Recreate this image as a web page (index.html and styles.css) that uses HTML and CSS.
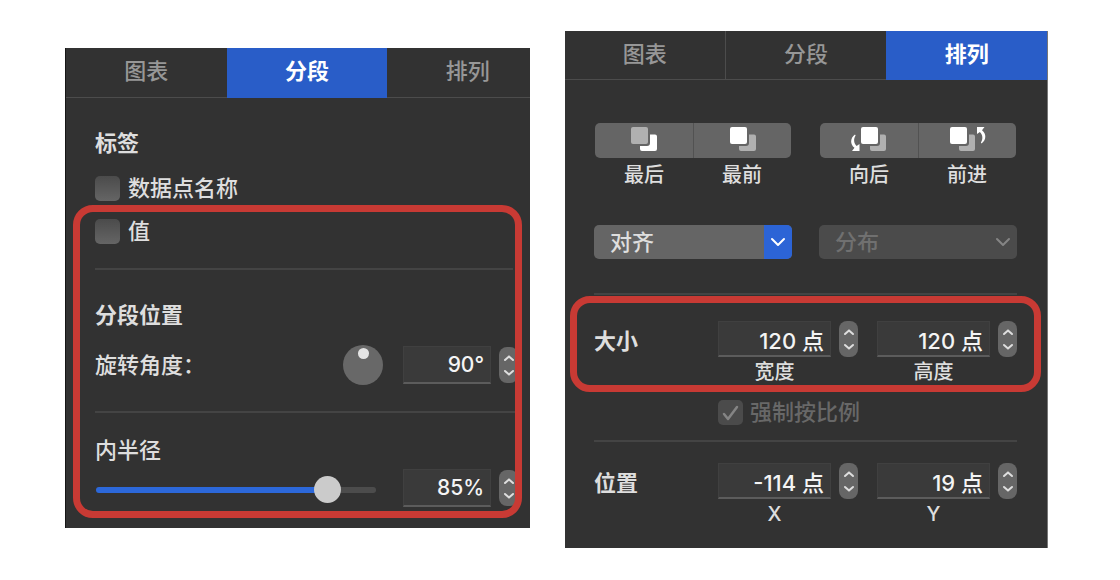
FILE: index.html
```html
<!DOCTYPE html>
<html lang="zh-CN">
<head>
<meta charset="utf-8">
<meta name="viewport" content="width=device-width, initial-scale=1">
<title>图表检查器</title>
<link rel="stylesheet" href="styles.css">
</head>
<body>
<svg width="0" height="0" class="defs" aria-hidden="true">
  <symbol id="up" viewBox="0 0 12 8"><path d="M2 6 L6 2.400 L10 6"/></symbol>
  <symbol id="down" viewBox="0 0 12 8"><path d="M2 2 L6 5.600 L10 2"/></symbol>
  <symbol id="chevron" viewBox="0 0 16 10"><path d="M2 2 L8 8 L14 2"/></symbol>
</svg>
<main class="board">
  <section class="panel panel-segment">
    <nav class="tabs" aria-label="分段检查器">
      <button class="tab" type="button">图表</button>
      <button class="tab active" type="button">分段</button>
      <button class="tab" type="button">排列</button>
    </nav>
    <div class="content">
      <h2 class="heading">标签</h2>
      <label class="check"><input type="checkbox" class="box">数据点名称</label>
      <div class="marked">
        <label class="check"><input type="checkbox" class="box">值</label>
        <hr class="rule rule-first">
        <h2 class="heading">分段位置</h2>
        <div class="row row-angle">
          <label class="grow" for="angle">旋转角度：</label>
          <div class="dial" role="slider" tabindex="0" aria-label="旋转角度" aria-valuenow="90" aria-valuemin="0" aria-valuemax="360"><span class="dial-dot"></span></div>
          <input class="field" id="angle" type="text" value="90°">
          <div class="stepper">
            <button type="button" aria-label="增加"><svg><use href="#up"/></svg></button>
            <button type="button" aria-label="减少"><svg><use href="#down"/></svg></button>
          </div>
        </div>
        <hr class="rule">
        <label class="radius-label" for="radius">内半径</label>
        <div class="row row-radius">
          <input class="range" id="radius" type="range" min="0" max="100" value="86">
          <input class="field" type="text" value="85%" aria-label="内半径百分比">
          <div class="stepper">
            <button type="button" aria-label="增加"><svg><use href="#up"/></svg></button>
            <button type="button" aria-label="减少"><svg><use href="#down"/></svg></button>
          </div>
        </div>
        <div class="outline outline-segment"></div>
      </div>
    </div>
  </section>

  <section class="panel panel-arrange">
    <nav class="tabs" aria-label="排列检查器">
      <button class="tab" type="button">图表</button>
      <button class="tab" type="button">分段</button>
      <button class="tab active" type="button">排列</button>
    </nav>
    <div class="content">
      <div class="pair">
        <div class="order">
          <div class="segmented">
            <button type="button" aria-labelledby="o1"><svg class="stack" viewBox="3 0 54 28"><path class="pale" d="M19 3h13a2 2 0 0 1 2 2v13a2 2 0 0 1-2 2H19a2 2 0 0 1-2-2V5a2 2 0 0 1 2-2z"/><path class="white" d="M36 10.500h5a2 2 0 0 1 2 2V25a2 2 0 0 1-2 2H28a2 2 0 0 1-2-2v-3h7a3 3 0 0 0 3-3z"/></svg></button>
            <button type="button" aria-labelledby="o2"><svg class="stack" viewBox="3 0 54 28"><path class="white" d="M19 3h13a2 2 0 0 1 2 2v13a2 2 0 0 1-2 2H19a2 2 0 0 1-2-2V5a2 2 0 0 1 2-2z"/><path class="pale" d="M36 10.500h5a2 2 0 0 1 2 2V25a2 2 0 0 1-2 2H28a2 2 0 0 1-2-2v-3h7a3 3 0 0 0 3-3z"/></svg></button>
          </div>
          <div class="captions"><span id="o1">最后</span><span id="o2">最前</span></div>
        </div>
        <div class="order">
          <div class="segmented">
            <button type="button" aria-labelledby="o3"><svg class="stack" viewBox="0 0 54 28"><path class="white" d="M21 3h13a2 2 0 0 1 2 2v13a2 2 0 0 1-2 2H21a2 2 0 0 1-2-2V5a2 2 0 0 1 2-2z"/><path class="pale" d="M38 10.500h4a2 2 0 0 1 2 2V25a2 2 0 0 1-2 2H30a2 2 0 0 1-2-2v-3h7a3 3 0 0 0 3-3z"/><path class="white" d="M13 10.500 C8 14 8 20.500 12.500 23.800 L10 27 H17.500 V20 L14.600 22 C11.500 19 11.500 14.500 13.600 11.500z"/></svg></button>
            <button type="button" aria-labelledby="o4"><svg class="stack" viewBox="0 0 54 28"><path class="white" d="M11 3h13a2 2 0 0 1 2 2v13a2 2 0 0 1-2 2H11a2 2 0 0 1-2-2V5a2 2 0 0 1 2-2z"/><path class="pale" d="M28 10.500h4a2 2 0 0 1 2 2V25a2 2 0 0 1-2 2H20a2 2 0 0 1-2-2v-3h7a3 3 0 0 0 3-3z"/><path class="white" d="M40.500 19.500 C45.500 16 45.500 9.500 41 6.200 L43.500 3 H36 V10 L38.900 8 C42 11 42 15.500 39.900 18.500z"/></svg></button>
          </div>
          <div class="captions"><span id="o3">向后</span><span id="o4">前进</span></div>
        </div>
      </div>

      <div class="pair popups">
        <div class="popup">
          <select aria-label="对齐"><option>对齐</option></select>
          <span class="arrow"><svg><use href="#chevron"/></svg></span>
        </div>
        <div class="popup off">
          <select aria-label="分布" disabled><option>分布</option></select>
          <span class="arrow"><svg><use href="#chevron"/></svg></span>
        </div>
      </div>
      <hr class="rule">

      <div class="metrics metrics-size">
        <h2 class="heading">大小</h2>
        <div class="metric">
          <input class="field" id="w" type="text" value="120 点">
          <div class="stepper">
            <button type="button" aria-label="增加"><svg><use href="#up"/></svg></button>
            <button type="button" aria-label="减少"><svg><use href="#down"/></svg></button>
          </div>
          <label for="w">宽度</label>
        </div>
        <div class="metric">
          <input class="field" id="h" type="text" value="120 点">
          <div class="stepper">
            <button type="button" aria-label="增加"><svg><use href="#up"/></svg></button>
            <button type="button" aria-label="减少"><svg><use href="#down"/></svg></button>
          </div>
          <label for="h">高度</label>
        </div>
        <div class="outline outline-size"></div>
      </div>

      <label class="check ratio"><input type="checkbox" class="box" checked disabled>强制按比例</label>
      <hr class="rule">

      <div class="metrics metrics-position">
        <h2 class="heading">位置</h2>
        <div class="metric">
          <input class="field" id="x" type="text" value="-114 点">
          <div class="stepper">
            <button type="button" aria-label="增加"><svg><use href="#up"/></svg></button>
            <button type="button" aria-label="减少"><svg><use href="#down"/></svg></button>
          </div>
          <label for="x">X</label>
        </div>
        <div class="metric">
          <input class="field" id="y" type="text" value="19 点">
          <div class="stepper">
            <button type="button" aria-label="增加"><svg><use href="#up"/></svg></button>
            <button type="button" aria-label="减少"><svg><use href="#down"/></svg></button>
          </div>
          <label for="y">Y</label>
        </div>
      </div>
    </div>
  </section>
</main>
</body>
</html>
```
FILE: styles.css
```css
* { box-sizing: border-box; }

body {
  margin: 0;
  background: #fff;
  color: #dedede;
  font: 500 22px/30px Inter, "Noto Sans CJK SC", sans-serif;
}

button, input, select { font: inherit; color: inherit; margin: 0; }
button { border: 0; padding: 0; background: none; }
svg { display: block; fill: none; stroke: currentColor; stroke-width: 2; stroke-linecap: round; stroke-linejoin: round; }
.defs { position: absolute; }

.board {
  display: flex;
  align-items: flex-start;
  gap: 35px;
  padding: 31px 72px 32px 65px;
}

.panel { background: #323232; min-width: 0; overflow: hidden; }
.panel-segment { flex: 465; margin-top: 17px; border-left: 1px solid #161616; }
.panel-arrange { flex: 483; border-right: 1px solid #777; }

/* Tabs */
.tabs { display: grid; grid-template-columns: repeat(3, 1fr); height: 49px; }
.panel-segment .tabs { height: 50px; width: calc(100% + 18px); }
.tab {
  padding-bottom: 3px;
  color: #979797;
  border-bottom: 1px solid #4c4c4c;
}
.panel-arrange .tab:first-child { border-right: 1px solid #4c4c4c; }
.tab.active { background: #295dc8; border-color: #295dc8; color: #fff; font-weight: 700; }

/* Shared pieces */
.heading { margin: 0; font-size: 22px; line-height: 30px; font-weight: 700; }
.rule { height: 2px; border: 0; margin: 0; background: #444; }
.check { display: flex; align-items: center; gap: 8px; }
.box {
  appearance: none;
  width: 25px;
  height: 25px;
  border-radius: 5px;
  background: linear-gradient(#4b4b4b, #656565);
}
.row { display: flex; align-items: center; gap: 8px; }
.grow { flex: 1; }
.field {
  min-width: 0;
  height: 38px;
  padding: 0 6px;
  text-align: right;
  color: #f4f4f4;
  background: #3a3a3a;
  border: 1px solid #404040;
  border-bottom: 2px solid #5c5c5c;
  border-radius: 0;
}
.stepper {
  display: grid;
  grid-template-rows: 1fr 1fr;
  width: 19px;
  height: 36px;
  padding: 3px 0;
  border-radius: 8px;
  background: #666;
}
.stepper button { display: grid; place-items: center; min-height: 0; }
.stepper svg { width: 12px; height: 8px; }
.outline {
  position: absolute;
  border: 7px solid #c83a34;
  border-radius: 20px;
  pointer-events: none;
}

/* Segment panel */
.panel-segment .content { padding: 30px 12px 21px 29px; }
.panel-segment .heading + .check { margin-top: 15px; }
.marked { position: relative; margin-top: 13px; }
.outline-segment { top: -11px; right: -4px; bottom: -11px; left: -22px; }
.rule-first { margin: 22px 5px 30px 0; }
.row-angle { margin: 15px 0 26px; height: 40px; }
.panel-segment .field { width: 88px; font-size: 21px; }
.dial {
  display: flex;
  justify-content: center;
  width: 40px;
  height: 40px;
  margin-right: 12px;
  padding-top: 3px;
  border-radius: 50%;
  background: #686868;
}
.dial-dot { width: 11px; height: 11px; border-radius: 50%; background: #e4e4e4; }
.radius-label { display: block; margin-top: 22px; }
.row-radius { margin-top: 4px; }
.range {
  appearance: none;
  flex: 1;
  min-width: 0;
  height: 27px;
  margin: 3px 19px 0 1px;
  background: none;
}
.range::-webkit-slider-runnable-track {
  height: 6px;
  border-radius: 3px;
  background: linear-gradient(90deg, #2c68da 82%, #4c4c4c 82%);
}
.range::-webkit-slider-thumb {
  appearance: none;
  width: 27px;
  height: 27px;
  margin-top: -11px;
  border-radius: 50%;
  background: #cbcbcb;
}

/* Arrange panel */
.panel-arrange .content { padding: 43px 30px 19px 29px; }
.pair { display: grid; grid-template-columns: 1fr 1fr; gap: 27px; }
.order { padding: 0 1px; }
.segmented {
  display: grid;
  grid-template-columns: 1fr 1fr;
  height: 35px;
  border-radius: 5px;
  background: #656565;
}
.segmented button { display: grid; place-items: center; padding-bottom: 5px; }
.segmented button + button { border-left: 1px solid #525252; }
.stack { width: 54px; height: 28px; stroke: none; }
.white { fill: #fff; }
.pale { fill: #b0b0b0; }
.captions { display: grid; grid-template-columns: 1fr 1fr; margin-top: 2px; text-align: center; font-size: 20px; }

.popups { margin: 35px 0 34px; }
.popup { position: relative; display: flex; height: 34px; border-radius: 5px; overflow: hidden; background: #656565; }
.popup select {
  appearance: none;
  flex: 1;
  min-width: 0;
  padding: 0 40px 0 16px;
  border: 0;
  background: none;
  opacity: 1;
}
.arrow {
  position: absolute;
  inset: 0 0 0 auto;
  display: grid;
  place-items: center;
  width: 28px;
  background: #2c64d6;
  color: #fff;
  pointer-events: none;
}
.arrow svg { width: 16px; height: 10px; }
.off { background: #4b4b4b; color: #707070; }
.off .arrow { background: none; color: #858585; }

.metrics {
  position: relative;
  display: grid;
  grid-template-columns: 105px 1fr 1fr;
  column-gap: 19px;
}
.metrics > .heading { line-height: 40px; }
.metric { display: grid; grid-template-columns: 1fr 19px; column-gap: 8px; }
.metric .field { width: 100%; height: 36px; }
.metric label { text-align: center; font-size: 20px; line-height: 30px; }
.metrics-size { margin-top: 26px; }
.outline-size { top: -25px; right: -24px; bottom: -5px; left: -24px; }

.ratio { margin: 10px 0 13px 124px; gap: 7px; color: #686868; }
.ratio .box {
  background: #4b4b4b url("data:image/svg+xml,%3Csvg xmlns='http://www.w3.org/2000/svg' viewBox='0 0 25 25'%3E%3Cpath d='M6 14l4 5L19 7' fill='none' stroke='%23858585' stroke-width='2.500' stroke-linecap='round' stroke-linejoin='round'/%3E%3C/svg%3E");
}
.metrics-position { margin-top: 21px; }
```
